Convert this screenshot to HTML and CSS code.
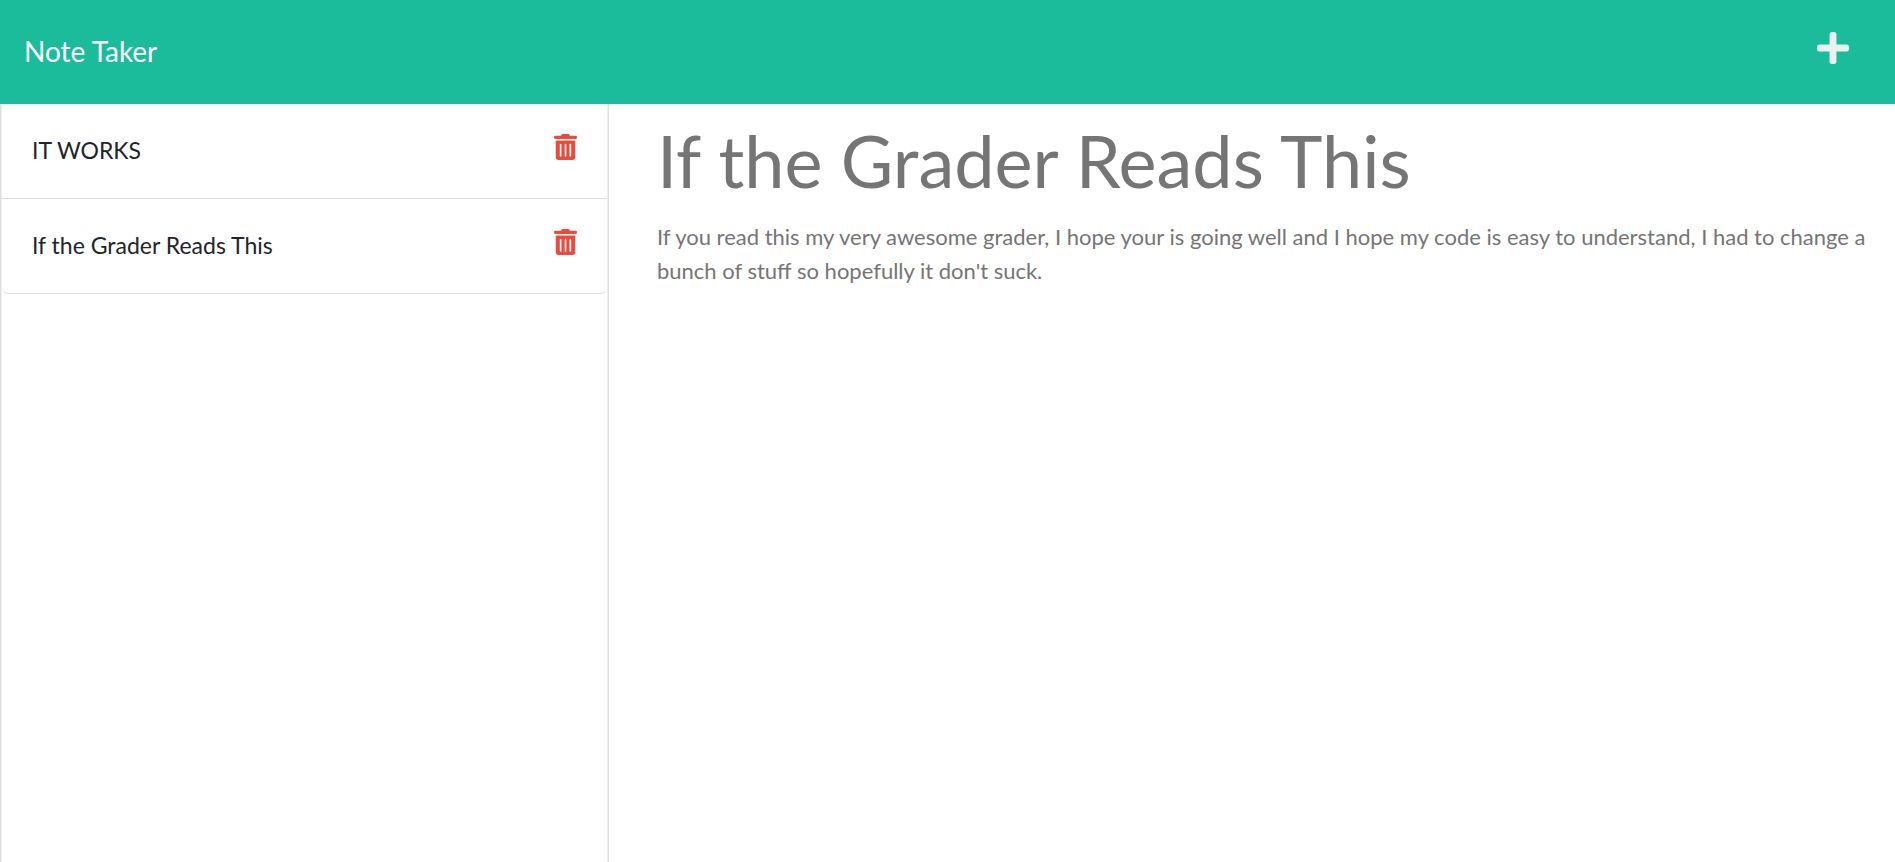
FILE: index.html
```html
<!DOCTYPE html>
<html lang="en">
<head>
<meta charset="utf-8">
<meta name="viewport" content="width=device-width, initial-scale=1">
<title>Note Taker</title>
<link rel="stylesheet" href="styles.css">
</head>
<body>
<svg class="sprite" aria-hidden="true">
  <symbol id="trash" viewBox="0 0 448 512"><path d="M32 464a48 48 0 0 0 48 48h288a48 48 0 0 0 48-48V128H32zm272-256a16 16 0 0 1 32 0v224a16 16 0 0 1-32 0zm-96 0a16 16 0 0 1 32 0v224a16 16 0 0 1-32 0zm-96 0a16 16 0 0 1 32 0v224a16 16 0 0 1-32 0zM432 32H312l-9.400-18.700A24 24 0 0 0 281.100 0H166.800a23.720 23.720 0 0 0-21.400 13.300L136 32H16A16 16 0 0 0 0 48v32a16 16 0 0 0 16 16h416a16 16 0 0 0 16-16V48a16 16 0 0 0-16-16z"/></symbol>
</svg>
<header class="navbar">
  <a class="brand" href="#">Note Taker</a>
  <button class="icon-button add" type="button" aria-label="New note">
    <svg class="icon-plus" viewBox="0 32 448 448" aria-hidden="true"><path d="M416 208H272V64c0-17.670-14.330-32-32-32h-32c-17.670 0-32 14.330-32 32v144H32c-17.670 0-32 14.330-32 32v32c0 17.670 14.330 32 32 32h144v144c0 17.670 14.330 32 32 32h32c17.670 0 32-14.330 32-32V304h144c17.670 0 32-14.330 32-32v-32c0-17.670-14.330-32-32-32z"/></svg>
  </button>
</header>
<div class="layout">
  <nav class="sidebar" aria-label="Notes">
    <ul class="note-list">
      <li class="note-item">
        <a class="note-link" href="#">IT WORKS</a>
        <button class="icon-button" type="button" aria-label="Delete IT WORKS"><svg class="icon-trash" aria-hidden="true"><use href="#trash"/></svg></button>
      </li>
      <li class="note-item">
        <a class="note-link" href="#">If the Grader Reads This</a>
        <button class="icon-button" type="button" aria-label="Delete If the Grader Reads This"><svg class="icon-trash" aria-hidden="true"><use href="#trash"/></svg></button>
      </li>
    </ul>
  </nav>
  <main class="note">
    <input class="note-title" type="text" value="If the Grader Reads This" aria-label="Note title" readonly>
    <textarea class="note-text" aria-label="Note text" rows="15" readonly>If you read this my very awesome grader, I hope your is going well and I hope my code is easy to understand, I had to change a bunch of stuff so hopefully it don't suck.</textarea>
  </main>
</div>
</body>
</html>
```
FILE: styles.css
```css
* {
  box-sizing: border-box;
}

body {
  margin: 0;
  min-height: 100vh;
  display: flex;
  flex-direction: column;
  background: #fff;
  color: #212529;
  font: 22px/34px Lato, sans-serif;
}

.sprite {
  display: none;
}

.navbar {
  display: flex;
  align-items: flex-start;
  justify-content: space-between;
  min-height: 104px;
  padding: 30px 24px;
  background: #1abc9c;
}

.brand {
  color: #fff;
  font-size: 28px;
  line-height: 42px;
  text-decoration: none;
}

.icon-button {
  display: flex;
  padding: 0;
  border: 0;
  background: none;
  color: #e74c3c;
  cursor: pointer;
}

.add {
  padding: 2px 22px 0 0;
  color: #ecf0f1;
}

.icon-plus {
  width: 32px;
  height: 32px;
  fill: currentColor;
}

.icon-trash {
  width: 23px;
  height: 26px;
  fill: currentColor;
}

.layout {
  flex: 1;
  display: grid;
  grid-template-columns: minmax(0, 609fr) minmax(0, 1286fr);
}

.sidebar {
  display: flex;
  border: solid #dfdfdf;
  border-width: 0 1px;
}

.note-list {
  flex: 1;
  margin: 0;
  padding: 0;
  border: solid #eee;
  border-width: 0 1px;
  list-style: none;
}

.note-item {
  display: flex;
  align-items: flex-start;
  justify-content: space-between;
  padding: 30px;
  border-bottom: 1px solid #dfdfdf;
}

.note-item:last-child {
  border-radius: 0 0 6px 6px;
}

.note-link {
  color: inherit;
  font-size: 23px;
  line-height: 32px;
  padding-bottom: 2px;
  text-decoration: none;
}

.note {
  padding: 20px 24px 24px 48px;
}

.note-title,
.note-text {
  display: block;
  width: 100%;
  padding: 0;
  border: 0;
  outline: 0;
  background: none;
  color: #757575;
  font: inherit;
}

.note-title {
  height: 72px;
  margin-bottom: 24px;
  font-size: 72px;
  line-height: 72px;
}

.note-text {
  resize: none;
}
```
